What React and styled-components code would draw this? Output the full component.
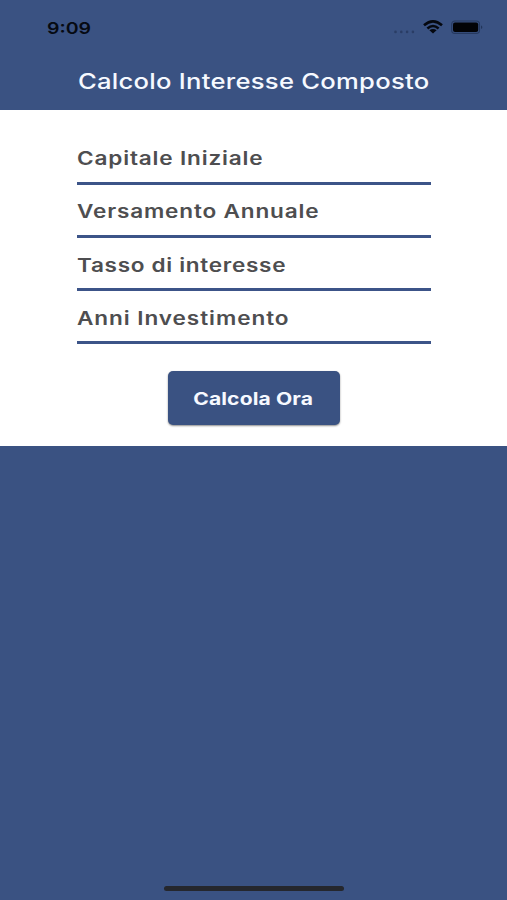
import React from 'react';
import styled, { createGlobalStyle } from 'styled-components';

const BLUE = '#3a5282';

const GlobalStyle = createGlobalStyle`
  body {
    margin: 0;
    background: ${BLUE};
    font-family: Inter, "Liberation Sans", sans-serif;
  }
`;

const Screen = styled.div`
  display: flex;
  flex-direction: column;
  width: 507px;
  height: 900px;
  overflow: hidden;
  background: ${BLUE};
`;

const StatusBar = styled.div`
  display: flex;
  justify-content: space-between;
  align-items: center;
  height: 55px;
  padding: 0 23px 0 46.5px;
  box-sizing: border-box;
`;

const WideText = styled.span`
  display: block;
  white-space: nowrap;
  line-height: 24px;
  transform: scaleX(1.22);
  transform-origin: ${(props) => props.$origin || 'left'} center;
  letter-spacing: ${(props) => props.$spacing || 0}px;
`;

const Time = styled(WideText)`
  font-size: 16px;
  font-weight: 600;
  color: #060a12;
`;

const StatusIcons = styled.svg`
  display: block;
  width: 92px;
  height: 18px;
`;

const Header = styled.header`
  height: 55px;
  padding-left: 77.5px;
`;

const Title = styled(WideText)`
  padding-top: 15px;
  font-size: 21px;
  font-weight: 500;
  color: #f6f9ff;
`;

const Form = styled.form`
  display: flex;
  flex-direction: column;
  align-items: center;
  height: 336px;
  padding-top: 21.7px;
  box-sizing: border-box;
  background: #fff;
`;

const Field = styled.label`
  display: flex;
  align-items: flex-end;
  width: 354px;
  height: 53.2px;
  padding: 0 0 11.6px 0.5px;
  box-sizing: border-box;
  border-bottom: 3px solid #3c5488;
  color: #4e4e50;
  font-size: 18.5px;
  font-weight: 600;
`;

const Button = styled.button`
  display: flex;
  justify-content: center;
  align-items: center;
  width: 172px;
  height: 54px;
  margin-top: 26.5px;
  padding: 2px 0 0;
  border: none;
  border-radius: 5px;
  background: ${BLUE};
  box-shadow: 0 1px 2px rgba(0, 0, 0, 0.45);
  color: #f6f9ff;
  font-family: inherit;
  font-size: 17.3px;
  font-weight: 700;
`;

const HomeIndicator = styled.div`
  width: 180px;
  height: 5px;
  margin: auto auto 9px;
  border-radius: 3px;
  background: #25272d;
`;

const fields = [
  { label: 'Capitale Iniziale', spacing: 0.68 },
  { label: 'Versamento Annuale', spacing: 0.68 },
  { label: 'Tasso di interesse', spacing: 0.56 },
  { label: 'Anni Investimento', spacing: 0.76 },
];

const App = () => (
  <>
    <GlobalStyle />
    <Screen>
      <StatusBar>
        <Time>9:09</Time>
        <StatusIcons viewBox="0 0 92 18">
          <g fill="#2a3d65">
            <circle cx="3.5" cy="12.9" r="1.3" />
            <circle cx="9.3" cy="12.9" r="1.3" />
            <circle cx="15.1" cy="12.9" r="1.3" />
            <circle cx="20.9" cy="12.9" r="1.3" />
          </g>
          <g fill="none" stroke="#05080f" strokeWidth="2.6">
            <path d="M32 6.2 Q41 -1.6 50 6.2" />
            <path d="M35.4 9.4 Q41 4.6 46.6 9.4" />
          </g>
          <path d="M37.4 11.3 Q41 8.6 44.6 11.3 L41 14.4 Z" fill="#05080f" />
          <rect x="59.7" y="2" width="27.8" height="12.4" rx="3.2" fill="none" stroke="#26395f" strokeWidth="1.1" />
          <rect x="61" y="3.4" width="25.2" height="9.6" rx="2" fill="#020306" />
          <path d="M89.2 6.2 Q91.4 8.1 89.2 10.1 Z" fill="#1d2f52" />
        </StatusIcons>
      </StatusBar>
      <Header>
        <Title $spacing={0.21}>Calcolo Interesse Composto</Title>
      </Header>
      <Form>
        {fields.map(({ label, spacing }) => (
          <Field key={label}>
            <WideText $spacing={spacing}>{label}</WideText>
          </Field>
        ))}
        <Button type="button">
          <WideText $origin="center" $spacing={0.1}>Calcola Ora</WideText>
        </Button>
      </Form>
      <HomeIndicator />
    </Screen>
  </>
);

export default App;
